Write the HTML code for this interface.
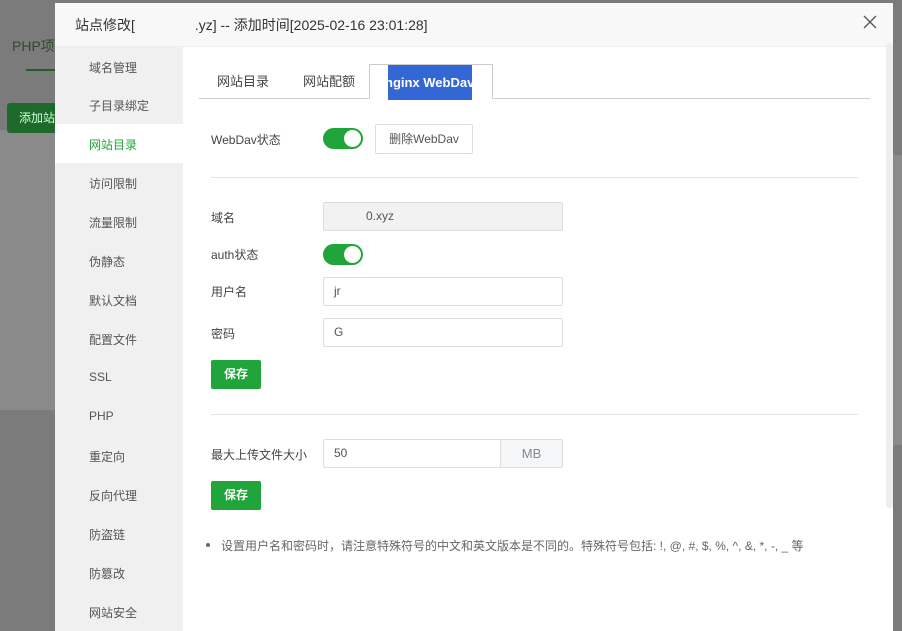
<!DOCTYPE html>
<html><head><meta charset="utf-8"><style>
*{box-sizing:border-box;margin:0;padding:0}
body{width:902px;height:631px;overflow:hidden;position:relative;background:#7b7b7b;font-family:"Liberation Sans","Noto Sans CJK SC",sans-serif;font-size:12px;color:#333}
.abs{position:absolute}
.dlg{left:55px;top:3px;width:838px;height:628px;background:#fff}
.hdr{left:0;top:0;width:838px;height:44px;background:#f8f8f8;border-bottom:1px solid #eee;font-size:14px;color:#333;line-height:44px;padding-left:20px}
.side{left:0;top:44px;width:128px;height:584px;background:#f0f0f0}
.side div{position:absolute;left:34px;font-size:12px;color:#555}
.act{background:#fff}
.lab{font-size:12px;color:#444}
.inp{border:1px solid #ddd;border-radius:2px;height:29px;line-height:27px;padding-left:10px;font-size:12px;color:#555;background:#fff}
.sw{width:40px;height:21px;border-radius:11px;background:#20a53a}
.sw:after{content:"";position:absolute;right:2px;top:2px;width:17px;height:17px;border-radius:50%;background:#fff}
.btn{background:#20a53a;color:#fff;font-weight:bold;font-size:12px;border-radius:2px;text-align:center;line-height:29px;width:50px;height:29px}
.hr{height:1px;background:#e4e4e4}
</style></head><body>
<div class="abs" style="left:0;top:130px;width:55px;height:280px;background:#8a8a8a"></div>
<div class="abs" style="left:12px;top:36px;color:#2d4a2d;font-size:14px">PHP项</div>
<div class="abs" style="left:26px;top:69px;width:30px;height:2px;background:#2a5a2a"></div>
<div class="abs" style="left:7px;top:103px;width:50px;height:30px;background:#1e6a2a;border-radius:3px;color:#cfd;line-height:30px;padding-left:12px">添加站</div>
<div class="abs" style="left:893px;top:155px;width:9px;height:290px;background:#8a8a8a"></div>

<div class="abs dlg">
<div class="abs hdr">站点修改[<span style="display:inline-block;width:60px"></span>.yz] -- 添加时间[2025-02-16 23:01:28]</div>
<svg class="abs" style="left:808px;top:12px" width="14" height="14" viewBox="0 0 14 14"><path d="M1 1L13 13M13 1L1 13" stroke="#555" stroke-width="1.3"/></svg>
<div class="abs side">
<div style="top:12px">域名管理</div>
<div style="top:50px">子目录绑定</div>
<div class="act" style="left:0;top:77px;width:128px;height:39px"></div>
<div style="top:89px;color:#20a53a">网站目录</div>
<div style="top:128px">访问限制</div>
<div style="top:167px">流量限制</div>
<div style="top:206px">伪静态</div>
<div style="top:245px">默认文档</div>
<div style="top:284px">配置文件</div>
<div style="top:323px">SSL</div>
<div style="top:362px">PHP</div>
<div style="top:401px">重定向</div>
<div style="top:440px">反向代理</div>
<div style="top:479px">防盗链</div>
<div style="top:518px">防篡改</div>
<div style="top:557px">网站安全</div>
</div>
<div class="abs" style="left:831px;top:40px;width:7px;height:465px;background:#eee;border-radius:3px"></div>
<div class="abs" style="left:144px;top:95px;width:671px;height:1px;background:#ccc"></div>
<div class="abs lab" style="left:162px;top:68px;font-size:13px">网站目录</div>
<div class="abs lab" style="left:248px;top:68px;font-size:13px">网站配额</div>
<div class="abs" style="left:314px;top:61px;width:124px;height:35px;border:1px solid #ccc;border-bottom:1px solid #fff;background:#fff"></div>
<div class="abs" style="left:333px;top:62px;width:84px;height:35px;background:#3367d6;color:#fff;font-size:13px;font-weight:bold;line-height:35px;overflow:hidden;white-space:nowrap;text-indent:-3px">nginx WebDav</div>

<div class="abs lab" style="left:156px;top:128px">WebDav状态</div>
<div class="abs sw" style="left:268px;top:125px"></div>
<div class="abs" style="left:320px;top:121px;width:98px;height:30px;border:1px solid #ddd;border-radius:2px;line-height:28px;text-align:center;color:#555">删除WebDav</div>
<div class="abs hr" style="left:156px;top:174px;width:647px"></div>

<div class="abs lab" style="left:156px;top:206px">域名</div>
<div class="abs inp" style="left:268px;top:199px;width:240px;background:#f2f2f2"><span style="margin-left:32px">0.xyz</span></div>
<div class="abs lab" style="left:156px;top:243px">auth状态</div>
<div class="abs sw" style="left:268px;top:241px"></div>
<div class="abs lab" style="left:156px;top:280px">用户名</div>
<div class="abs inp" style="left:268px;top:274px;width:240px">jr</div>
<div class="abs lab" style="left:156px;top:322px">密码</div>
<div class="abs inp" style="left:268px;top:315px;width:240px">G</div>
<div class="abs btn" style="left:156px;top:357px">保存</div>
<div class="abs hr" style="left:156px;top:411px;width:647px"></div>
<div class="abs lab" style="left:156px;top:443px">最大上传文件大小</div>
<div class="abs inp" style="left:268px;top:436px;width:240px">50</div>
<div class="abs" style="left:445px;top:437px;width:62px;height:27px;background:#f5f6f8;border-left:1px solid #ddd;text-align:center;line-height:27px;color:#888;font-size:13px">MB</div>
<div class="abs btn" style="left:156px;top:478px">保存</div>
<div class="abs" style="left:151px;top:540px;width:4px;height:4px;border-radius:50%;background:#666"></div>
<div class="abs" style="left:166px;top:534px;color:#666;font-size:12px;white-space:nowrap">设置用户名和密码时，请注意特殊符号的中文和英文版本是不同的。特殊符号包括: !, @, #, $, %, ^, &amp;, *, -, _ 等</div>
</div>
</body></html>
